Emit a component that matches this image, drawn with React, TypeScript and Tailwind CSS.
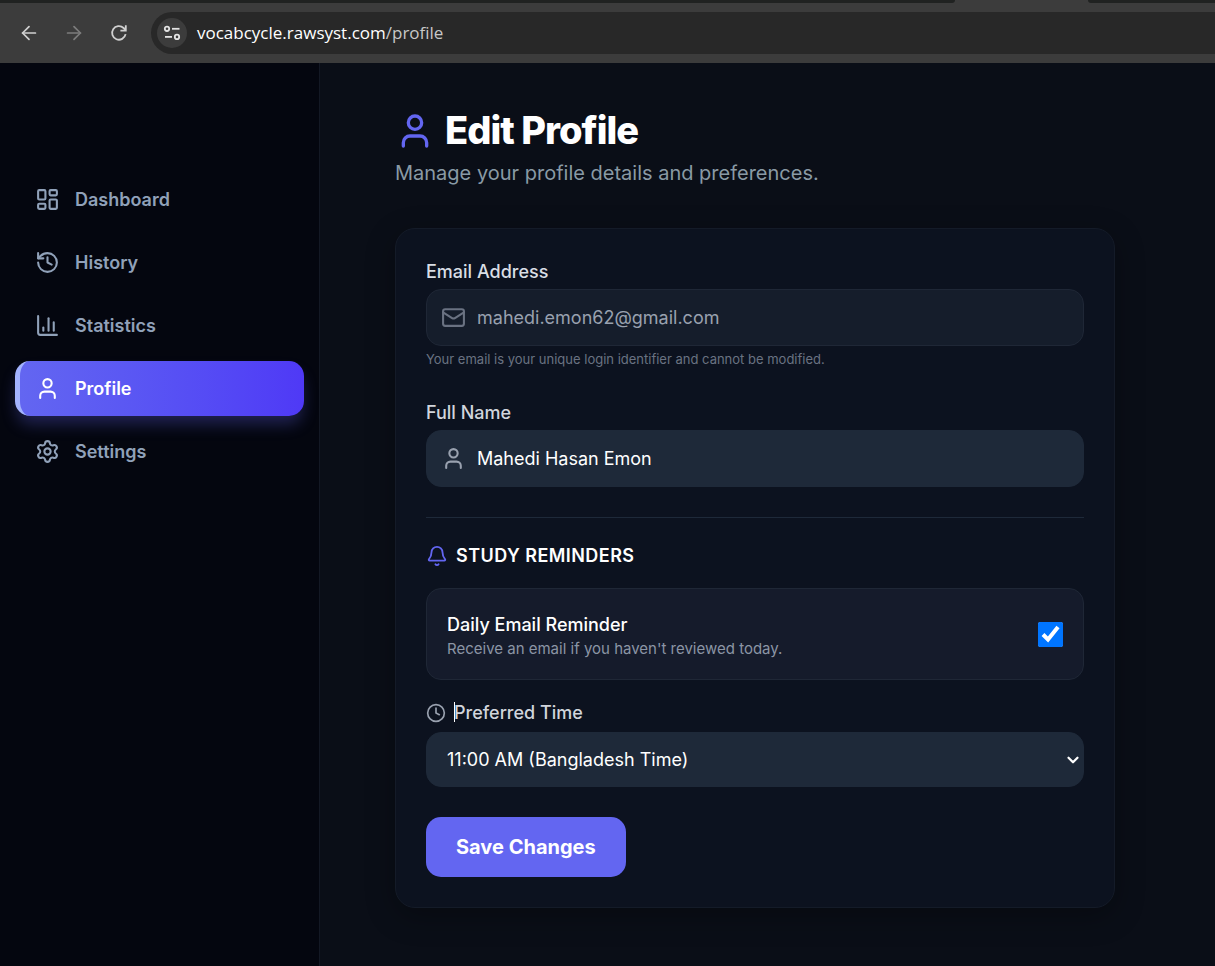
import React from "react";
import {
  ArrowLeft,
  ArrowRight,
  Bell,
  ChartColumn,
  ChevronDown,
  Clock,
  History,
  LayoutDashboard,
  Mail,
  Settings,
  User,
} from "lucide-react";

const navItems = [
  { label: "Dashboard", icon: LayoutDashboard },
  { label: "History", icon: History },
  { label: "Statistics", icon: ChartColumn },
  { label: "Profile", icon: User, active: true },
  { label: "Settings", icon: Settings },
];

const BrowserBar: React.FC = () => (
  <header className="bg-[#3c3c3c]">
    {/* Bottom edge of the tab strip, with the open tab cut out of it */}
    <div className="flex h-[3px]">
      <div className="w-[955px] rounded-br-[3px] bg-[#202221]"></div>
      <div className="w-[133px]"></div>
      <div className="flex-1 rounded-bl-[3px] bg-[#202221]"></div>
    </div>
    <div className="flex h-[60px] items-center pb-px">
      <div className="flex items-center gap-[23px] pl-[18px] pr-[21px]">
        <button type="button" aria-label="Back" className="text-[#d0d0d0]">
          <ArrowLeft size={22} strokeWidth={1.9} />
        </button>
        <button type="button" aria-label="Forward" className="text-[#7c7c7c]">
          <ArrowRight size={22} strokeWidth={1.9} />
        </button>
        <button type="button" aria-label="Reload" className="text-[#d0d0d0]">
          <svg width="22" height="22" viewBox="0 0 22 22" fill="none" stroke="currentColor" strokeWidth="1.8">
            <path d="M17.6 12.2A6.8 6.8 0 1 1 15.6 6L17.6 8" />
            <path d="M17.8 3.2V8.6H12.4" />
          </svg>
        </button>
      </div>
      <div className="flex h-[42px] flex-1 items-center gap-[10px] rounded-l-full bg-[#282828] pl-[6px]">
        <button
          type="button"
          aria-label="View site information"
          className="flex h-[30px] w-[30px] items-center justify-center rounded-full bg-[#3c3c3c] text-[#e3e3e3]"
        >
          <svg width="18" height="18" viewBox="0 0 18 18" fill="none" stroke="currentColor" strokeWidth="1.8">
            <circle cx="4" cy="4.8" r="2.2" />
            <path d="M9 4.8h7.5" />
            <circle cx="14" cy="12.9" r="2.2" />
            <path d="M2 12.9h7" />
          </svg>
        </button>
        <span className="font-['Open_Sans',sans-serif] text-[17px] leading-6 text-[#c7c7c7]">
          <span className="text-white">vocabcycle.rawsyst.com</span>/profile
        </span>
      </div>
    </div>
  </header>
);

const Sidebar: React.FC = () => (
  <aside className="w-80 flex-shrink-0 border-r border-[#131824] bg-[#04060f] px-[15px] pt-[109px]">
    <nav className="flex flex-col gap-2">
      {navItems.map(({ label, icon: Icon, active }) => (
        <a
          key={label}
          href="#"
          className={`flex h-[55px] items-center gap-[15px] rounded-[15px] text-[18px] font-semibold ${
            active
              ? "border-l-[5px] border-[#a3b3ff] bg-gradient-to-r from-[#6366f1] to-[#4f39f6] pl-[15px] text-white shadow-[0_10px_16px_-2px_rgba(99,102,241,0.3)]"
              : "pl-5 text-[#90a1b9]"
          }`}
        >
          <Icon size={25} />
          {label}
        </a>
      ))}
    </nav>
  </aside>
);

const App: React.FC = () => {
  const [name, setName] = React.useState("Mahedi Hasan Emon");
  const [reminder, setReminder] = React.useState(true);

  return (
    <div className="flex min-h-screen flex-col bg-[#0a0e17] font-[Inter,sans-serif]">
      <BrowserBar />
      <div className="flex flex-1">
        <Sidebar />
        <main className="flex flex-1 justify-center pb-[58px] pr-[25px] pt-[45px]">
          <div className="w-full max-w-[720px]">
            <h1 className="flex items-center gap-[10px] text-[38px] font-extrabold leading-[45px] tracking-tight text-white">
              <User size={40} className="text-[#6366f1]" />
              Edit Profile
            </h1>
            <p className="mt-[5px] text-[20px] leading-[30px] text-[#899aa5]">
              Manage your profile details and preferences.
            </p>

            <form
              onSubmit={(e) => e.preventDefault()}
              className="mt-10 rounded-[20px] border border-[#141b28] bg-[#0c121f] p-[30px] shadow-[0_8px_30px_rgba(0,0,0,0.3)]"
            >
              <label htmlFor="email" className="mb-[5px] block text-[18px] font-medium leading-[25px] text-[#d9dee5]">
                Email Address
              </label>
              <div className="relative">
                <Mail size={25} className="absolute left-[15px] top-4 text-[#6a7282]" />
                <input
                  id="email"
                  type="email"
                  readOnly
                  value="mahedi.emon62@gmail.com"
                  className="h-[57px] w-full rounded-[15px] border border-[#1f2736] bg-[#151d2b] pl-[50px] pr-4 text-[18px] text-[#99a1af] outline-none"
                />
              </div>
              <p className="mt-[3px] text-[13px] leading-5 text-[#6a7282]">
                Your email is your unique login identifier and cannot be modified.
              </p>

              <label htmlFor="name" className="mb-[5px] mt-[31px] block text-[18px] font-medium leading-[25px] text-[#d1d5dc]">
                Full Name
              </label>
              <div className="relative">
                <User size={25} className="absolute left-[15px] top-4 text-[#99a1af]" />
                <input
                  id="name"
                  type="text"
                  value={name}
                  onChange={(e) => setName(e.target.value)}
                  className="h-[57px] w-full rounded-[15px] border border-[#1e2939] bg-[#1e2939] pl-[50px] pr-4 text-[18px] text-white outline-none"
                />
              </div>

              <div className="mt-[30px] border-t border-[#1e2939] pt-[25px]">
                <h2 className="flex items-center gap-2 text-[18px] font-semibold uppercase leading-[25px] tracking-wide text-white">
                  <Bell size={22} className="text-[#6366f1]" />
                  Study Reminders
                </h2>
                <div className="mt-5 flex h-[92px] items-center justify-between rounded-[15px] border border-[#1f2736] bg-[#151b2b] px-5">
                  <div className="pt-1">
                    <label htmlFor="reminder" className="block text-[18px] font-medium leading-[25px] text-white">
                      Daily Email Reminder
                    </label>
                    <p className="text-[15px] leading-[23px] text-[#8b95a5]">
                      Receive an email if you haven't reviewed today.
                    </p>
                  </div>
                  <input
                    id="reminder"
                    type="checkbox"
                    checked={reminder}
                    onChange={(e) => setReminder(e.target.checked)}
                    className="h-[25px] w-[25px]"
                  />
                </div>
              </div>

              <label
                htmlFor="time"
                className="mb-[7px] mt-5 flex items-center gap-2 text-[18px] font-medium leading-[25px] text-[#d1d5dc]"
              >
                <Clock size={20} className="text-[#99a1af]" />
                <span className="relative">
                  <span className="absolute left-0 top-0.5 h-5 w-px bg-white"></span>
                  Preferred Time
                </span>
              </label>
              <div className="relative">
                <select
                  id="time"
                  className="h-[55px] w-full appearance-none rounded-[15px] border border-[#1e2939] bg-[#1e2939] pl-5 pr-6 text-[18px] text-white outline-none"
                >
                  <option>11:00 AM (Bangladesh Time)</option>
                </select>
                <ChevronDown
                  size={18}
                  strokeWidth={3}
                  className="pointer-events-none absolute right-0.5 top-[19px] text-white"
                />
              </div>

              <button
                type="submit"
                className="mt-[30px] block h-[60px] rounded-[15px] bg-[#6366f1] px-[30px] text-[20px] font-bold text-white"
              >
                Save Changes
              </button>
            </form>
          </div>
        </main>
      </div>
    </div>
  );
};

export default App;
